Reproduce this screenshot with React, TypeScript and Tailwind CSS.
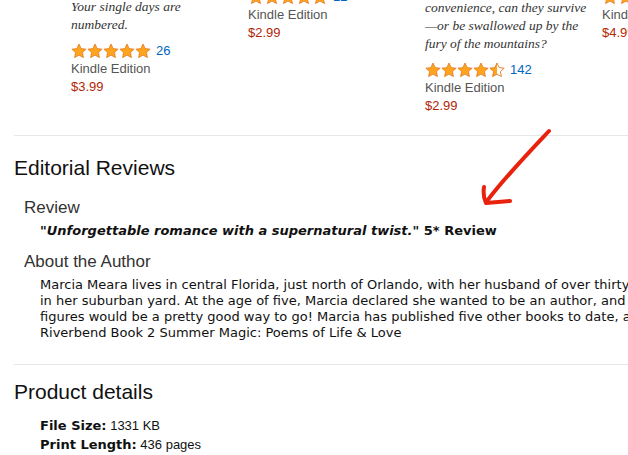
import React from "react";

type Card = {
    desc?: string[];
    rating: number;
    count: string;
    price: string;
    offset: string;
};

const cards: Card[] = [
    { desc: ["Your single days are", "numbered."], rating: 5, count: "26", price: "$3.99", offset: "mt-[-2px]" },
    { rating: 5, count: "12", price: "$2.99", offset: "mt-[-12px]" },
    {
        desc: ["convenience, can they survive", "\u2014or be swallowed up by the", "fury of the mountains?"],
        rating: 4.5,
        count: "142",
        price: "$2.99",
        offset: "mt-[-1px]",
    },
    { rating: 4.5, count: "9", price: "$4.99", offset: "mt-[-12px]" },
];

const STAR = "8,1 10.12,5.59 15.13,6.18 11.42,9.61 12.41,14.57 8,12.1 3.59,14.57 4.58,9.61 0.87,6.18 5.88,5.59";

function Star({ kind, id }: { kind: "full" | "half"; id: string }) {
    return (
        <svg width="16" height="16" viewBox="0 0 16 16" className="shrink-0">
            {kind === "full" ? (
                <polygon points={STAR} fill="#ffa41c" stroke="#de7921" strokeWidth="0.8" strokeLinejoin="round" />
            ) : (
                <>
                    <defs>
                        <clipPath id={id}>
                            <rect x="0" y="0" width="8" height="16" />
                        </clipPath>
                    </defs>
                    <polygon points={STAR} fill="#ffa41c" clipPath={`url(#${id})`} />
                    <polygon points={STAR} fill="none" stroke="#de7921" strokeWidth="0.9" strokeLinejoin="round" />
                </>
            )}
        </svg>
    );
}

function Stars({ rating, count, idx }: { rating: number; count: string; idx: number }) {
    return (
        <div className="flex items-center h-[18px]">
            {[0, 1, 2, 3, 4].map((i) => (
                <Star key={i} kind={rating >= i + 1 ? "full" : "half"} id={`half-${idx}-${i}`} />
            ))}
            <span className="ml-[5px] text-[13px] text-[#0066c0]">{count}</span>
        </div>
    );
}

export default function App() {
    return (
        <div className="relative w-[628px] h-[455px] overflow-hidden bg-white text-[#111] font-['Liberation_Sans',Arial,sans-serif]">
            {/* carousel strip */}
            <div className="h-[135px] overflow-hidden flex items-start pl-[71px]">
                {cards.map((c, i) => (
                    <div key={i} className={`w-[177px] shrink-0 flex flex-col ${c.offset}`}>
                        {c.desc && (
                            <div className="mb-[8px] font-['Liberation_Serif',serif] italic text-[13.5px] leading-[18px] text-[#333]">
                                {c.desc.map((l) => (
                                    <div key={l} className="whitespace-nowrap">{l}</div>
                                ))}
                            </div>
                        )}
                        <Stars rating={c.rating} count={c.count} idx={i} />
                        <div className="text-[13px] leading-[18px] text-[#555] whitespace-nowrap">Kindle Edition</div>
                        <div className="text-[13px] leading-[18px] text-[#b12704]">{c.price}</div>
                    </div>
                ))}
            </div>

            <div className="ml-[14px] border-t border-[#e7e7e7]" />

            {/* editorial reviews */}
            <div className="pl-[14px]">
                <h2 className="mt-[20px] text-[21px] leading-[24px]">Editorial Reviews</h2>
                <div className="pl-[10px]">
                    <h3 className="mt-[18px] text-[17px] leading-[20px] text-[#333]">Review</h3>
                    <p className="mt-[5px] pl-[16px] text-[13px] leading-[16px] font-bold font-['DejaVu_Sans',Verdana,sans-serif] text-[#111] whitespace-nowrap">
                        <i>"Unforgettable romance with a supernatural twist."</i> 5* Review
                    </p>
                    <h3 className="mt-[13px] text-[17px] leading-[20px] text-[#333]">About the Author</h3>
                    <div className="mt-[5px] pl-[16px] text-[13px] leading-[16px] font-['DejaVu_Sans',Verdana,sans-serif] text-[#111]">
                        <div className="whitespace-nowrap">Marcia Meara lives in central Florida, just north of Orlando, with her husband of over thirty years,</div>
                        <div className="whitespace-nowrap">in her suburban yard. At the age of five, Marcia declared she wanted to be an author, and decided that</div>
                        <div className="whitespace-nowrap">figures would be a pretty good way to go! Marcia has published five other books to date, and</div>
                        <div className="whitespace-nowrap">Riverbend Book 2 Summer Magic: Poems of Life &amp; Love</div>
                    </div>
                </div>
            </div>

            <div className="mt-[23px] ml-[14px] border-t border-[#e7e7e7]" />

            {/* product details */}
            <div className="pl-[14px]">
                <h2 className="mt-[15px] text-[21px] leading-[24px]">Product details</h2>
                <ul className="mt-[12px] pl-[26px] text-[13px] leading-[19px] text-[#111]">
                    <li>
                        <span className="font-bold font-['DejaVu_Sans',Verdana,sans-serif]">File Size:</span> 1331 KB
                    </li>
                    <li>
                        <span className="font-bold font-['DejaVu_Sans',Verdana,sans-serif]">Print Length:</span> 436 pages
                    </li>
                </ul>
            </div>

            {/* hand drawn annotation */}
            <svg className="absolute inset-0 pointer-events-none" width="628" height="455" viewBox="0 0 628 455">
                <path
                    d="M549 131 C 532 149, 506 176, 487 201"
                    fill="none"
                    stroke="#e8220d"
                    strokeWidth="4"
                    strokeLinecap="round"
                />
                <path
                    d="M484 187 C 483 194, 484 199, 486 203 L 510 201"
                    fill="none"
                    stroke="#e8220d"
                    strokeWidth="4"
                    strokeLinecap="round"
                    strokeLinejoin="round"
                />
            </svg>
        </div>
    );
}
